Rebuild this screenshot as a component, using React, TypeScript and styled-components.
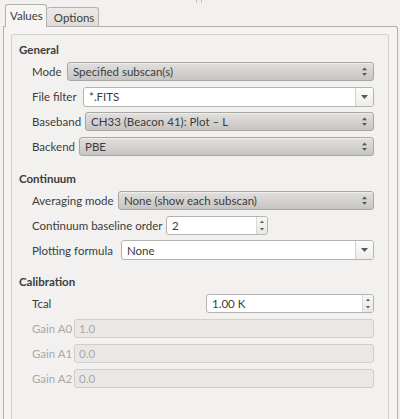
import styled, { createGlobalStyle } from 'styled-components';

const GlobalStyle = createGlobalStyle`
  html, body {
    margin: 0;
    padding: 0;
    background: #f2f1f0;
  }
  body {
    font-family: Lato, "Noto Sans", sans-serif;
    font-size: 11.5px;
    color: #3c3c3c;
  }
`;

const UpDownArrows = () => (
  <svg width="7" height="11" viewBox="0 0 7 11">
    <polygon points="3.5,1.5 1,4.2 6,4.2" fill="#555" />
    <polygon points="1,7 6,7 3.5,9.7" fill="#555" />
  </svg>
);

const DownArrow = () => (
  <svg width="7" height="4" viewBox="0 0 7 4">
    <polygon points="0,0 7,0 3.5,4" fill="#5a5a5a" />
  </svg>
);

const SpinArrows = () => (
  <svg width="6" height="13" viewBox="0 0 6 13">
    <polygon points="3,1.5 0.8,4 5.2,4" fill="#666" />
    <polygon points="0.8,9 5.2,9 3,11.5" fill="#666" />
  </svg>
);

interface ComboProps {
  value: string;
}

const Combo = ({ value }: ComboProps) => (
  <Styles.combo>
    <span>{value}</span>
    <UpDownArrows />
  </Styles.combo>
);

const EditCombo = ({ value }: ComboProps) => (
  <Styles.editCombo>
    <Styles.editText>{value}</Styles.editText>
    <Styles.dropButton>
      <DownArrow />
    </Styles.dropButton>
  </Styles.editCombo>
);

const SpinBox = ({ value, width }: { value: string; width?: number }) => (
  <Styles.spin $width={width}>
    <Styles.editText>{value}</Styles.editText>
    <Styles.spinButtons>
      <SpinArrows />
    </Styles.spinButtons>
  </Styles.spin>
);

export default function App() {
  return (
    <>
      <GlobalStyle />
      <Styles.window>
        <Styles.tabBar>
          <Styles.grip />
          <Styles.tab $active>Values</Styles.tab>
          <Styles.tab>Options</Styles.tab>
        </Styles.tabBar>
        <Styles.pane>
          <Styles.frame>
            <Styles.section>
              <Styles.heading>General</Styles.heading>
              <Styles.rows>
                <Styles.row>
                  <Styles.label $w={35}>Mode</Styles.label>
                  <Combo value="Specified subscan(s)" />
                </Styles.row>
                <Styles.row>
                  <Styles.label $w={51}>File filter</Styles.label>
                  <EditCombo value="*.FITS" />
                </Styles.row>
                <Styles.row>
                  <Styles.label $w={53}>Baseband</Styles.label>
                  <Combo value="CH33 (Beacon 41): Plot – L" />
                </Styles.row>
                <Styles.row>
                  <Styles.label $w={47}>Backend</Styles.label>
                  <Combo value="PBE" />
                </Styles.row>
              </Styles.rows>
            </Styles.section>

            <Styles.section>
              <Styles.heading>Continuum</Styles.heading>
              <Styles.rows>
                <Styles.row>
                  <Styles.label $w={86}>Averaging mode</Styles.label>
                  <Combo value="None (show each subscan)" />
                </Styles.row>
                <Styles.row>
                  <Styles.label $w={134}>Continuum baseline order</Styles.label>
                  <SpinBox value="2" width={102} />
                </Styles.row>
                <Styles.row>
                  <Styles.label $w={89}>Plotting formula</Styles.label>
                  <EditCombo value="None" />
                </Styles.row>
              </Styles.rows>
            </Styles.section>

            <Styles.section>
              <Styles.heading>Calibration</Styles.heading>
              <Styles.rows>
                <Styles.row>
                  <Styles.label $w={174}>Tcal</Styles.label>
                  <SpinBox value="1.00 K" />
                </Styles.row>
                <Styles.row>
                  <Styles.label $w={42} $disabled>Gain A0</Styles.label>
                  <Styles.disabledEdit>1.0</Styles.disabledEdit>
                </Styles.row>
                <Styles.row>
                  <Styles.label $w={42} $disabled>Gain A1</Styles.label>
                  <Styles.disabledEdit>0.0</Styles.disabledEdit>
                </Styles.row>
                <Styles.row>
                  <Styles.label $w={42} $disabled>Gain A2</Styles.label>
                  <Styles.disabledEdit>0.0</Styles.disabledEdit>
                </Styles.row>
              </Styles.rows>
            </Styles.section>
          </Styles.frame>
        </Styles.pane>
      </Styles.window>
    </>
  );
}

const Styles = {
  window: styled.div`
    width: 400px;
    height: 419px;
    overflow: hidden;
    display: flex;
    flex-direction: column;
    background: #f2f1f0;
  `,
  tabBar: styled.div`
    position: relative;
    height: 26px;
    flex: none;
    display: flex;
    align-items: flex-end;
    padding-left: 5px;
  `,
  grip: styled.div`
    position: absolute;
    left: 196px;
    top: 0;
    width: 4px;
    height: 3px;
    border-left: 1px solid #c6c4c1;
    border-right: 1px solid #c6c4c1;
  `,
  tab: styled.div<{ $active?: boolean }>`
    position: relative;
    z-index: ${(p) => (p.$active ? 2 : 1)};
    box-sizing: border-box;
    height: ${(p) => (p.$active ? 23 : 19)}px;
    margin-bottom: ${(p) => (p.$active ? -1 : 0)}px;
    padding: ${(p) => (p.$active ? '3px 3px 0 4px' : '2px 4px 0 7px')};
    border: 1px solid #b3b1ae;
    border-bottom: none;
    border-radius: 3px 3px 0 0;
    background: ${(p) =>
      p.$active ? '#f6f5f4' : 'linear-gradient(#ebeae8, #dedcd9)'};
    line-height: 15px;
    color: #3c3c3c;
    white-space: nowrap;
    ${(p) => !p.$active && 'border-left: none;'}
  `,
  pane: styled.div`
    flex: 1;
    display: flex;
    flex-direction: column;
    margin: 0 2px 0 3px;
    padding: 7px 8px 0 7px;
    border: 1px solid #b3b1ae;
    border-bottom: none;
    border-radius: 0 3px 0 0;
    background: #f5f4f3;
  `,
  frame: styled.div`
    flex: 1;
    min-height: 420px;
    padding: 8px 14px 0 7px;
    border: 1px solid #d3d1ce;
    border-radius: 2px;
    background: #f2f1f0;
    display: flex;
    flex-direction: column;
    gap: 15.5px;
  `,
  section: styled.div`
    display: flex;
    flex-direction: column;
  `,
  heading: styled.div`
    font-weight: 700;
    line-height: 14px;
    margin-bottom: 5px;
    color: #3c3c3c;
  `,
  rows: styled.div`
    display: flex;
    flex-direction: column;
    gap: 6px;
    padding-left: 13px;
  `,
  row: styled.div`
    display: flex;
    align-items: center;
    height: 19px;
  `,
  label: styled.div<{ $w: number; $disabled?: boolean }>`
    flex: none;
    width: ${(p) => p.$w}px;
    white-space: nowrap;
    color: ${(p) => (p.$disabled ? '#a8a8a8' : '#3c3c3c')};
  `,
  combo: styled.div`
    flex: 1;
    box-sizing: border-box;
    height: 19px;
    display: flex;
    align-items: center;
    justify-content: space-between;
    padding: 0 5px 0 5px;
    border: 1px solid #a9a7a4;
    border-radius: 3px;
    background: linear-gradient(#e1e0de, #c6c5c3);
    box-shadow: inset 0 1px 0 rgba(255, 255, 255, 0.45);
    color: #3c3c3c;
    white-space: nowrap;
  `,
  editCombo: styled.div`
    flex: 1;
    box-sizing: border-box;
    height: 20px;
    display: flex;
    border: 1px solid #b5b3b0;
    border-radius: 3px;
    background: #ffffff;
    overflow: hidden;
  `,
  editText: styled.div`
    flex: 1;
    display: flex;
    align-items: center;
    padding-left: 5px;
    color: #3c3c3c;
    white-space: nowrap;
  `,
  dropButton: styled.div`
    flex: none;
    width: 17px;
    display: flex;
    align-items: center;
    justify-content: center;
    border-left: 1px solid #d2d0cd;
    background: linear-gradient(#fbfbfa, #eeedeb);
  `,
  spin: styled.div<{ $width?: number }>`
    ${(p) => (p.$width ? `width: ${p.$width}px; flex: none;` : 'flex: 1;')}
    box-sizing: border-box;
    height: 19px;
    display: flex;
    border: 1px solid #b5b3b0;
    border-radius: 3px;
    background: #ffffff;
    overflow: hidden;
  `,
  spinButtons: styled.div`
    flex: none;
    width: 10px;
    display: flex;
    align-items: center;
    justify-content: center;
    border-left: 1px solid #dad8d5;
    background: linear-gradient(#f7f7f6, #e9e8e6);
  `,
  disabledEdit: styled.div`
    flex: 1;
    box-sizing: border-box;
    height: 19px;
    display: flex;
    align-items: center;
    padding-left: 4px;
    border: 1px solid #d0cecb;
    border-radius: 3px;
    background: #e9e8e6;
    color: #a8a8a8;
  `,
};
